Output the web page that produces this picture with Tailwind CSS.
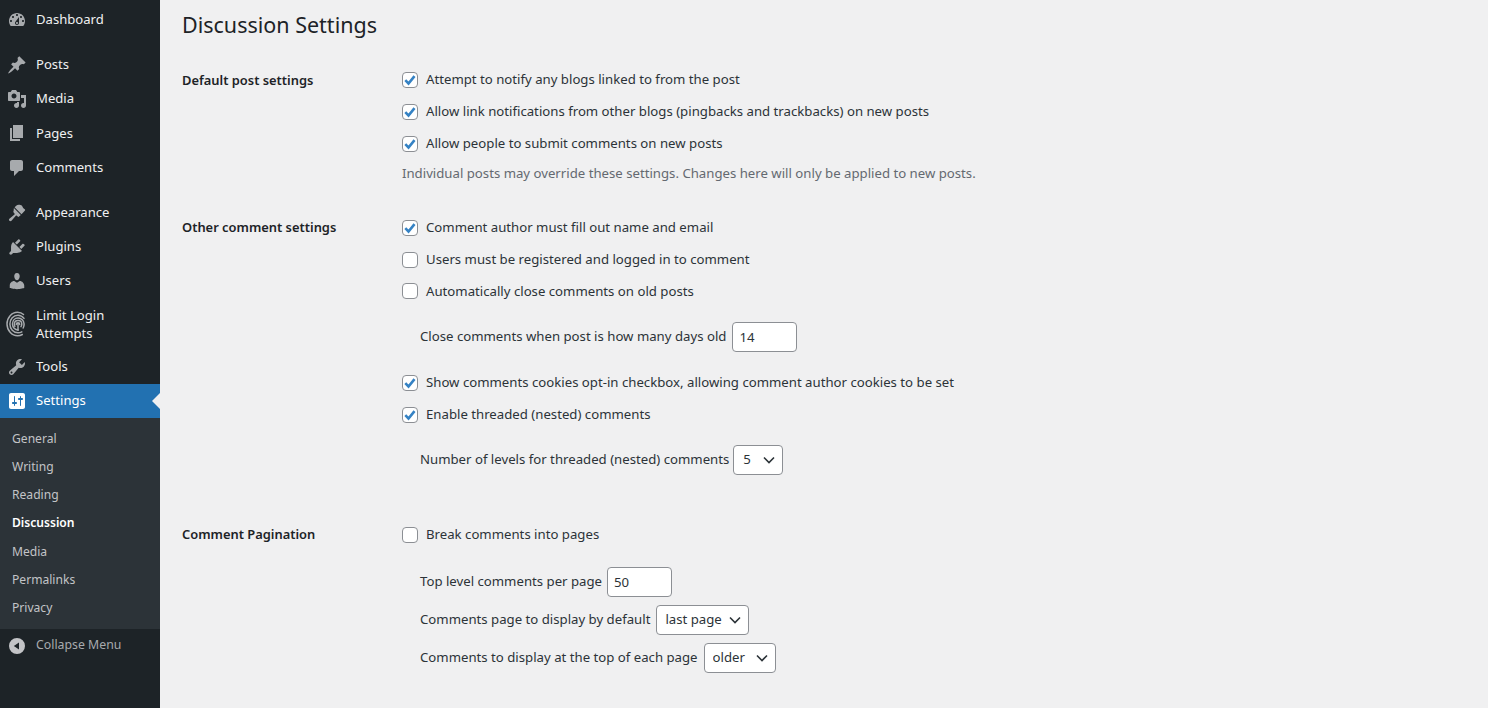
<!DOCTYPE html>
<html lang="en">
<head>
  <meta charset="UTF-8" />
  <title>Discussion Settings</title>
  <script src="https://cdn.jsdelivr.net/npm/@tailwindcss/browser@4"></script>
</head>
<body class="bg-[#f0f0f1] font-['Noto_Sans',sans-serif] text-[13.2px] text-[#2c3338] overflow-hidden">
<div class="flex h-[708px] w-[1488px] overflow-hidden">

  <!-- sidebar -->
  <aside class="w-[160px] shrink-0 bg-[#1d2327] pt-[2.6px] text-[13.1px] text-[#f0f0f1]">
    <a class="flex h-[34.4px] items-center gap-[9px] pl-[7px]">
      <svg viewBox="0 0 20 20" class="h-5 w-5 fill-[#a7aaad]" fill-rule="evenodd"><path d="M3.76 16h12.48c1.1-1.37 1.76-3.11 1.76-5 0-4.42-3.58-8-8-8s-8 3.58-8 8c0 1.89.66 3.63 1.76 5zM10 4c.55 0 1 .45 1 1s-.45 1-1 1-1-.45-1-1 .45-1 1-1zM6 6c.55 0 1 .45 1 1s-.45 1-1 1-1-.45-1-1 .45-1 1-1zm8 0c.55 0 1 .45 1 1s-.45 1-1 1-1-.45-1-1 .45-1 1-1zm-5.37 5.55L12 7v6c0 1.1-.9 2-2 2s-2-.9-2-2c0-.57.24-1.08.63-1.45zM4 10c.55 0 1 .45 1 1s-.45 1-1 1-1-.45-1-1 .45-1 1-1zm12 0c.55 0 1 .45 1 1s-.45 1-1 1-1-.45-1-1 .45-1 1-1zm-5 3c0-.55-.45-1-1-1s-1 .45-1 1 .45 1 1 1 1-.45 1-1z"/></svg>
      <span>Dashboard</span>
    </a>
    <a class="mt-[10.4px] flex h-[34.4px] items-center gap-[9px] pl-[7px]">
      <svg viewBox="0 0 20 20" class="h-5 w-5 fill-[#a7aaad]"><path d="M10.44 3.02l1.82-1.82 6.36 6.35-1.83 1.82c-1.05-.68-2.48-.57-3.41.36l-.75.75c-.92.93-1.04 2.35-.35 3.41l-1.83 1.82-2.41-2.41-2.8 2.79c-.42.42-3.38 2.71-3.8 2.29s1.86-3.39 2.28-3.81l2.79-2.79L4.1 9.36l1.83-1.82c1.05.69 2.48.57 3.4-.36l.75-.75c.93-.92 1.05-2.35.36-3.41z"/></svg>
      <span>Posts</span>
    </a>
    <a class="flex h-[34.4px] items-center gap-[9px] pl-[7px]">
      <svg viewBox="0 0 20 20" class="h-5 w-5 fill-[#a7aaad]" fill-rule="evenodd"><path d="M13 11V4c0-.55-.45-1-1-1h-1.67L9 1H5L3.67 3H2c-.55 0-1 .45-1 1v7c0 .55.45 1 1 1h10c.55 0 1-.45 1-1zM7 4.5c1.38 0 2.5 1.12 2.5 2.5S8.38 9.5 7 9.5 4.5 8.38 4.5 7 5.62 4.5 7 4.5zM14 6h5v10.5c0 1.38-1.12 2.5-2.5 2.5S14 17.88 14 16.5s1.12-2.5 2.5-2.5c.17 0 .34.02.5.05V9h-3V6zm-4 8.05V13h2v3.5c0 1.38-1.12 2.5-2.5 2.5S7 17.88 7 16.5 8.12 14 9.5 14c.17 0 .34.02.5.05z"/></svg>
      <span>Media</span>
    </a>
    <a class="flex h-[34.4px] items-center gap-[9px] pl-[7px]">
      <svg viewBox="0 0 20 20" class="h-5 w-5 fill-[#a7aaad]"><path d="M6 15V2h10v13H6zm-1 1h8v2H3V5h2v11z"/></svg>
      <span>Pages</span>
    </a>
    <a class="flex h-[34.4px] items-center gap-[9px] pl-[7px]">
      <svg viewBox="0 0 20 20" class="h-5 w-5 fill-[#a7aaad]"><path d="M5 2h9c1.1 0 2 .9 2 2v7c0 1.1-.9 2-2 2h-2l-5 5v-5H5c-1.1 0-2-.9-2-2V4c0-1.1.9-2 2-2z"/></svg>
      <span>Comments</span>
    </a>
    <a class="mt-[10.4px] flex h-[34.4px] items-center gap-[9px] pl-[7px]">
      <svg viewBox="0 0 20 20" class="h-5 w-5 fill-[#a7aaad]"><path d="M14.5 11.2L7.6 4.3l1.6-1.6c1.2-1.1 3-.9 4.3-.6 1 .2 1.6.9 2 1.6.4.8.6 1.2 1.2 1.7.5.4 1 .6 1.3 1 .2.3.2.7 0 1zM6.9 5l6.9 6.9-1.7 1.7c-.4.4-1 .4-1.4 0l-.9-.9c-.3-.3-.7-.3-1 0l-4.3 5.1c-.6.6-1.5.6-2.1 0s-.6-1.5 0-2.1l5.1-4.3c.3-.3.3-.7 0-1l-.9-.9c-.4-.4-.4-1 0-1.4z"/></svg>
      <span>Appearance</span>
    </a>
    <a class="flex h-[34.4px] items-center gap-[9px] pl-[7px]">
      <svg viewBox="0 0 20 20" class="h-5 w-5 fill-[#a7aaad]"><path d="M13.11 4.36L9.87 7.6 8 5.73l3.24-3.24c.35-.34 1.05-.2 1.56.32.52.51.66 1.21.31 1.55zm-8 1.77l.91-1.12 9.01 9.01-1.19.84c-.71.71-2.63 1.16-3.82 1.16H6.14L4.9 17.26c-.59.59-1.54.59-2.12 0-.59-.58-.59-1.53 0-2.12l1.24-1.24v-3.88c0-1.13.4-3.19 1.09-3.89zm7.26 3.97l3.24-3.24c.34-.35 1.04-.21 1.55.31.52.51.66 1.21.31 1.55l-3.24 3.25z"/></svg>
      <span>Plugins</span>
    </a>
    <a class="flex h-[34.4px] items-center gap-[9px] pl-[7px]">
      <svg viewBox="0 0 20 20" class="h-5 w-5 fill-[#a7aaad]"><path d="M10 9.25c-2.27 0-2.73-3.44-2.73-3.44C7 4.02 7.82 2 9.97 2c2.16 0 2.98 2.02 2.71 3.81 0 0-.41 3.44-2.68 3.44zm0 2.57L12.72 10c2.39 0 4.52 2.33 4.52 4.53v2.49s-3.65 1.13-7.24 1.13c-3.65 0-7.24-1.13-7.24-1.13v-2.49c0-2.25 1.94-4.48 4.47-4.48z"/></svg>
      <span>Users</span>
    </a>
    <a class="flex h-[51.4px] items-center gap-[10px] pl-[6px]">
      <svg viewBox="0 0 20 26" class="h-[26px] w-5 fill-none stroke-[#a7aaad]" stroke-width="1.5" stroke-linecap="round">
        <path d="M17.5 3.5C16 2 13.8 1.2 11.5 1.2 5.8 1.2 1 6.6 1 13s4.8 11.8 10.5 11.8c1.8 0 3.4-.4 4.8-1.3"/>
        <path d="M18 7.4C16.4 5.2 14.2 4.2 12 4.2 7.4 4.2 3.9 8.2 3.9 13s3.5 8.8 8.1 8.8c1.4 0 2.7-.3 3.8-1"/>
        <path d="M17.2 17c.6-1.1.9-2.6.9-4 0-3.4-2.7-6-6-6s-5.6 2.6-5.6 6 2.5 6 5.6 6"/>
        <path d="M8.9 15.4C8.5 14.6 8.4 13.8 8.4 13c0-2 1.6-3.6 3.7-3.6s3.7 1.6 3.7 3.6c0 1-.3 1.9-.8 2.7"/>
        <path d="M12 12.4v6.8M10.3 13.4c0-.9.8-1.7 1.7-1.7s1.7.8 1.7 1.7"/>
      </svg>
      <span class="leading-[18px]">Limit Login<br />Attempts</span>
    </a>
    <a class="flex h-[34.4px] items-center gap-[9px] pl-[7px]">
      <svg viewBox="0 0 20 20" class="h-5 w-5 fill-[#a7aaad]" fill-rule="evenodd"><path d="M16.68 9.77c-1.34 1.34-3.3 1.67-4.95.99l-5.41 6.52c-.99.99-2.59.99-3.58 0s-.99-2.59 0-3.57l6.52-5.42c-.68-1.65-.35-3.61.99-4.95 1.28-1.28 3.12-1.62 4.72-1.06l-2.89 2.89 2.82 2.82 2.86-2.87c.53 1.58.18 3.39-1.08 4.65zM3.81 16.21c.4.39 1.04.39 1.43 0 .4-.4.4-1.04 0-1.43-.39-.4-1.03-.4-1.43 0-.39.39-.39 1.03 0 1.43z"/></svg>
      <span>Tools</span>
    </a>
    <a class="relative flex h-[34px] items-center gap-[9px] bg-[#2271b1] pl-[7px] text-white">
      <svg viewBox="0 0 20 20" class="h-5 w-5 fill-white" fill-rule="evenodd"><path d="M18 16V4c0-1.1-.9-2-2-2H4c-1.1 0-2 .9-2 2v12c0 1.1.9 2 2 2h12c1.1 0 2-.9 2-2zM8 11h1c.55 0 1 .45 1 1s-.45 1-1 1H8v1.5c0 .28-.22.5-.5.5s-.5-.22-.5-.5V13H6c-.55 0-1-.45-1-1s.45-1 1-1h1V5.5c0-.28.22-.5.5-.5s.5.22.5.5V11zm5-2h-1c-.55 0-1-.45-1-1s.45-1 1-1h1V5.5c0-.28.22-.5.5-.5s.5.22.5.5V7h1c.55 0 1 .45 1 1s-.45 1-1 1h-1v5.5c0 .28-.22.5-.5.5s-.5-.22-.5-.5V9z"/></svg>
      <span>Settings</span>
      <span class="absolute right-0 top-[9px] border-y-[8px] border-r-[8px] border-y-transparent border-r-[#f0f0f1]"></span>
    </a>
    <ul class="bg-[#2c3338] py-[6.5px] pl-[12px] text-[12.1px] text-[#c3c4c7]">
      <li class="flex h-[28.2px] items-center">General</li>
      <li class="flex h-[28.2px] items-center">Writing</li>
      <li class="flex h-[28.2px] items-center">Reading</li>
      <li class="flex h-[28.2px] items-center font-semibold text-white">Discussion</li>
      <li class="flex h-[28.2px] items-center">Media</li>
      <li class="flex h-[28.2px] items-center">Permalinks</li>
      <li class="flex h-[28.2px] items-center">Privacy</li>
    </ul>
    <a class="flex h-[34px] items-center gap-[9px] pl-[7px] text-[12.3px] text-[#a7aaad]">
      <svg viewBox="0 0 20 20" class="h-5 w-5 fill-[#c3c4c7]" fill-rule="evenodd"><path d="M10 2a8 8 0 1 1 0 16 8 8 0 0 1 0-16zm2 4.5L6.8 10l5.2 3.5z"/></svg>
      <span>Collapse Menu</span>
    </a>
  </aside>

  <!-- content -->
  <main class="flex-1 pl-[22px]">
    <h1 class="flex h-[50px] items-center text-[21.5px] text-[#1d2327]">Discussion Settings</h1>

    <section class="mt-[14.4px] flex">
      <h2 class="flex h-[32px] w-[220px] items-center text-[12.9px] font-semibold text-[#1d2327]">Default post settings</h2>
      <div>
        <label class="flex h-[31.7px] items-center gap-[8px]">
          <span class="flex h-4 w-4 items-center justify-center rounded-[4px] border border-[#8c8f94] bg-white"><svg viewBox="0 0 14 14" class="h-[14px] w-[14px] fill-none stroke-[#3582c4]" stroke-width="2.6"><path d="M2.3 7.2l3.2 3.3 6-7.4"/></svg></span>
          Attempt to notify any blogs linked to from the post
        </label>
        <label class="flex h-[31.7px] items-center gap-[8px]">
          <span class="flex h-4 w-4 items-center justify-center rounded-[4px] border border-[#8c8f94] bg-white"><svg viewBox="0 0 14 14" class="h-[14px] w-[14px] fill-none stroke-[#3582c4]" stroke-width="2.6"><path d="M2.3 7.2l3.2 3.3 6-7.4"/></svg></span>
          Allow link notifications from other blogs (pingbacks and trackbacks) on new posts
        </label>
        <label class="flex h-[31.7px] items-center gap-[8px]">
          <span class="flex h-4 w-4 items-center justify-center rounded-[4px] border border-[#8c8f94] bg-white"><svg viewBox="0 0 14 14" class="h-[14px] w-[14px] fill-none stroke-[#3582c4]" stroke-width="2.6"><path d="M2.3 7.2l3.2 3.3 6-7.4"/></svg></span>
          Allow people to submit comments on new posts
        </label>
        <p class="flex h-[28px] items-center text-[#646970]">Individual posts may override these settings. Changes here will only be applied to new posts.</p>
      </div>
    </section>

    <section class="mt-[25px] flex">
      <h2 class="flex h-[30px] w-[220px] items-center text-[12.9px] font-semibold text-[#1d2327]">Other comment settings</h2>
      <div>
        <label class="flex h-[31.6px] items-center gap-[8px]">
          <span class="flex h-4 w-4 items-center justify-center rounded-[4px] border border-[#8c8f94] bg-white"><svg viewBox="0 0 14 14" class="h-[14px] w-[14px] fill-none stroke-[#3582c4]" stroke-width="2.6"><path d="M2.3 7.2l3.2 3.3 6-7.4"/></svg></span>
          Comment author must fill out name and email
        </label>
        <label class="flex h-[31.6px] items-center gap-[8px]">
          <span class="h-4 w-4 rounded-[4px] border border-[#8c8f94] bg-white"></span>
          Users must be registered and logged in to comment
        </label>
        <label class="flex h-[31.6px] items-center gap-[8px]">
          <span class="h-4 w-4 rounded-[4px] border border-[#8c8f94] bg-white"></span>
          Automatically close comments on old posts
        </label>
        <div class="flex h-[60px] items-center gap-[6px] pl-[18px]">
          Close comments when post is how many days old
          <input value="14" class="h-[30px] w-[65px] rounded-[4px] border border-[#8c8f94] bg-white px-[6px] text-[#2c3338]" />
        </div>
        <label class="flex h-[31.6px] items-center gap-[8px]">
          <span class="flex h-4 w-4 items-center justify-center rounded-[4px] border border-[#8c8f94] bg-white"><svg viewBox="0 0 14 14" class="h-[14px] w-[14px] fill-none stroke-[#3582c4]" stroke-width="2.6"><path d="M2.3 7.2l3.2 3.3 6-7.4"/></svg></span>
          Show comments cookies opt-in checkbox, allowing comment author cookies to be set
        </label>
        <label class="flex h-[31.6px] items-center gap-[8px]">
          <span class="flex h-4 w-4 items-center justify-center rounded-[4px] border border-[#8c8f94] bg-white"><svg viewBox="0 0 14 14" class="h-[14px] w-[14px] fill-none stroke-[#3582c4]" stroke-width="2.6"><path d="M2.3 7.2l3.2 3.3 6-7.4"/></svg></span>
          Enable threaded (nested) comments
        </label>
        <div class="flex h-[59px] items-center gap-[4px] pl-[18px]">
          Number of levels for threaded (nested) comments
          <span class="relative flex">
            <select class="h-[30px] w-[50px] appearance-none rounded-[4px] border border-[#8c8f94] bg-white pl-[9px] text-[#2c3338]"><option>5</option></select>
            <svg viewBox="0 0 12 8" class="pointer-events-none absolute right-[8px] top-[11px] h-[8px] w-[12px] fill-none stroke-[#2c3338]" stroke-width="1.6"><path d="M1 1.5l5 5 5-5"/></svg>
          </span>
        </div>
      </div>
    </section>

    <section class="mt-[29.6px] flex">
      <h2 class="flex h-[32px] w-[220px] items-center text-[12.9px] font-semibold text-[#1d2327]">Comment Pagination</h2>
      <div>
        <label class="flex h-[32px] items-center gap-[8px]">
          <span class="h-4 w-4 rounded-[4px] border border-[#8c8f94] bg-white"></span>
          Break comments into pages
        </label>
        <div class="mt-[12px] flex h-[38px] items-center gap-[5px] pl-[18px]">
          Top level comments per page
          <input value="50" class="h-[30px] w-[65px] rounded-[4px] border border-[#8c8f94] bg-white px-[6px] text-[#2c3338]" />
        </div>
        <div class="flex h-[38px] items-center gap-[6px] pl-[18px]">
          Comments page to display by default
          <span class="relative flex">
            <select class="h-[30px] w-[93px] appearance-none rounded-[4px] border border-[#8c8f94] bg-white pl-[8px] text-[#2c3338]"><option>last page</option></select>
            <svg viewBox="0 0 12 8" class="pointer-events-none absolute right-[8px] top-[11px] h-[8px] w-[12px] fill-none stroke-[#2c3338]" stroke-width="1.6"><path d="M1 1.5l5 5 5-5"/></svg>
          </span>
        </div>
        <div class="flex h-[38px] items-center gap-[6px] pl-[18px]">
          Comments to display at the top of each page
          <span class="relative flex">
            <select class="h-[30px] w-[72px] appearance-none rounded-[4px] border border-[#8c8f94] bg-white pl-[8px] text-[#2c3338]"><option>older</option></select>
            <svg viewBox="0 0 12 8" class="pointer-events-none absolute right-[8px] top-[11px] h-[8px] w-[12px] fill-none stroke-[#2c3338]" stroke-width="1.6"><path d="M1 1.5l5 5 5-5"/></svg>
          </span>
        </div>
      </div>
    </section>
  </main>
</div>
</body>
</html>
